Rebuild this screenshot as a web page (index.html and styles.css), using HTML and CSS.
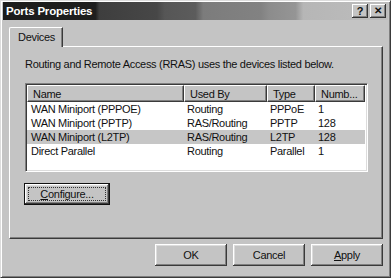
FILE: index.html
```html
<!DOCTYPE html>
<html lang="en">
  <head>
    <meta charset="UTF-8" />
    <title>Ports Properties</title>
    <link rel="stylesheet" href="styles.css">
  </head>
  <body>
    <div class="window">
      <!-- Title Bar -->
      <div class="titlebar">
        <span class="title">Ports Properties</span>
        <div class="caption-btns">
          <span class="cap-btn">?</span>
          <span class="cap-btn cap-close">✕</span>
        </div>
      </div>

      <div class="content">
        <div class="tabs">
          <div class="tab">Devices</div>
        </div>

        <div class="panel">
          <p class="intro">Routing and Remote Access (RRAS) uses the devices listed below.</p>

          <!-- Device List -->
          <div class="listview">
            <div class="lv-header">
              <div class="lv-col col-name">Name</div>
              <div class="lv-col col-used">Used By</div>
              <div class="lv-col col-type">Type</div>
              <div class="lv-col col-num">Numb...</div>
            </div>
            <div class="lv-row">
              <span class="col-name">WAN Miniport (PPPOE)</span>
              <span class="col-used">Routing</span>
              <span class="col-type">PPPoE</span>
              <span class="col-num">1</span>
            </div>
            <div class="lv-row">
              <span class="col-name">WAN Miniport (PPTP)</span>
              <span class="col-used">RAS/Routing</span>
              <span class="col-type">PPTP</span>
              <span class="col-num">128</span>
            </div>
            <div class="lv-row selected">
              <span class="col-name">WAN Miniport (L2TP)</span>
              <span class="col-used">RAS/Routing</span>
              <span class="col-type">L2TP</span>
              <span class="col-num">128</span>
            </div>
            <div class="lv-row">
              <span class="col-name">Direct Parallel</span>
              <span class="col-used">Routing</span>
              <span class="col-type">Parallel</span>
              <span class="col-num">1</span>
            </div>
          </div>

          <button class="btn btn-configure"><span class="focus"><u>C</u>onfigure...</span></button>
        </div>

        <!-- Dialog Buttons -->
        <div class="footer">
          <button class="btn">OK</button>
          <button class="btn">Cancel</button>
          <button class="btn"><u>A</u>pply</button>
        </div>
      </div>
    </div>
  </body>
</html>
```

FILE: styles.css
```css
/* General Styles */
* {
  box-sizing: border-box;
}

body {
  margin: 0;
  padding: 0;
  background: #c4c4c4;
  font-family: "Liberation Sans", Arial, sans-serif;
  font-size: 11px;
  letter-spacing: -0.3px;
  color: #111;
  overflow: hidden;
}

.window {
  width: 391px;
  height: 278px;
  background: #c4c4c4;
  border-left: 1px solid #dcdcdc;
  border-top: 1px solid #dcdcdc;
  border-right: 1px solid #3a3a3a;
  border-bottom: 1px solid #3a3a3a;
  box-shadow: inset 1px 1px 0 #fff, inset -1px -1px 0 #7e7e7e;
  padding: 1px 2px 2px 2px;
  display: flex;
  flex-direction: column;
}

/* Title Bar */
.titlebar {
  height: 18px;
  display: flex;
  align-items: center;
  justify-content: space-between;
  padding: 0 2px 0 3px;
  background: linear-gradient(to right, #1c1c1c 0%, #1e1e1e 24%, #3e3e3e 25%, #474747 40%, #565656 42%, #5c5c5c 50%, #7c7c7c 52%, #828282 67%, #8c8c8c 69%, #959595 76%, #b6b6b6 78%, #bdbdbd 100%);
}

.title {
  color: #fff;
  font-weight: bold;
  font-size: 11.5px;
  letter-spacing: -0.2px;
}

.caption-btns {
  display: flex;
  gap: 2px;
}

.cap-btn {
  width: 16px;
  height: 14px;
  background: #c4c4c4;
  box-shadow: inset -1px -1px 0 #333, inset 1px 1px 0 #fff, inset -2px -2px 0 #808080;
  display: flex;
  align-items: center;
  justify-content: center;
  font-weight: bold;
  font-size: 11px;
  color: #111;
  line-height: 1;
}

.cap-close {
  font-size: 10px;
}

.content {
  flex: 1;
  padding: 7px 6px 0 6px;
  display: flex;
  flex-direction: column;
}

/* Tabs */
.tabs {
  display: flex;
  height: 19px;
  position: relative;
  z-index: 1;
}

.tab {
  width: 54px;
  height: 20px;
  background: #c4c4c4;
  border-top: 1px solid #fff;
  border-left: 1px solid #fff;
  border-right: 1px solid #3a3a3a;
  border-top-left-radius: 2px;
  box-shadow: inset -1px 0 0 #808080;
  padding: 3px 0 0 8px;
}

.panel {
  width: 374px;
  height: 193px;
  border-top: 1px solid #fff;
  border-left: 1px solid #fff;
  border-right: 1px solid #3a3a3a;
  border-bottom: 1px solid #3a3a3a;
  box-shadow: inset -1px -1px 0 #808080;
  padding: 11px 14px 0 15px;
}

.intro {
  margin: 0 0 12px 0;
  height: 13px;
}

/* List View */
.listview {
  width: 343px;
  height: 89px;
  background: #fff;
  border-top: 1px solid #808080;
  border-left: 1px solid #808080;
  border-right: 1px solid #fff;
  border-bottom: 1px solid #fff;
  box-shadow: inset 1px 1px 0 #3a3a3a, inset -1px -1px 0 #dcdcdc;
  padding: 1px 2px 1px 1px;
}

.lv-header {
  display: flex;
  height: 17px;
  background: #c4c4c4;
}

.lv-col {
  height: 17px;
  border-top: 1px solid #fff;
  border-left: 1px solid #fff;
  border-right: 1px solid #3a3a3a;
  border-bottom: 1px solid #3a3a3a;
  box-shadow: inset -1px -1px 0 #808080;
  padding: 2px 0 0 5px;
  white-space: nowrap;
}

.col-name {
  width: 157px;
}

.col-used {
  width: 83px;
}

.col-type {
  width: 48px;
}

.col-num {
  width: 50px;
}

.lv-row {
  display: flex;
  height: 14px;
  align-items: center;
  white-space: nowrap;
}

.lv-row span {
  padding-left: 4px;
}

.lv-row .col-used,
.lv-row .col-type,
.lv-row .col-num {
  padding-left: 3px;
}

.lv-row.selected {
  background: #c6c6c6;
  width: 338px;
}

/* Buttons */
.btn {
  width: 72px;
  height: 22px;
  padding: 0;
  font-family: "Liberation Sans", Arial, sans-serif;
  font-size: 11px;
  letter-spacing: -0.3px;
  color: #111;
  background: #c4c4c4;
  border: none;
  border-radius: 0;
  box-shadow: inset -1px -1px 0 #3a3a3a, inset 1px 1px 0 #fff, inset -2px -2px 0 #808080, inset 2px 2px 0 #dcdcdc;
}

.btn-configure {
  width: 86px;
  margin: 11px 0 0 -1px;
  border: 1px solid #111;
  padding: 3px;
}

.focus {
  display: flex;
  align-items: center;
  justify-content: center;
  height: 100%;
  border: 1px dotted #333;
}

.footer {
  display: flex;
  justify-content: flex-end;
  gap: 6px;
  padding: 5px 0 0 0;
  width: 374px;
}
```
